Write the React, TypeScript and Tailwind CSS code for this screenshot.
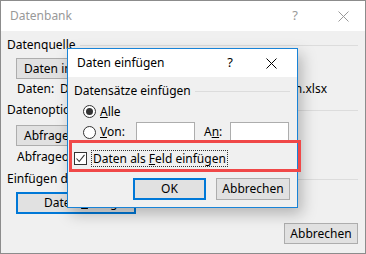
function CloseIcon({ className }: { className: string }) {
  return (
    <svg width="11" height="11" viewBox="0 0 11 11" className={className}>
      <path d="M0.5 0.5 L10.5 10.5 M10.5 0.5 L0.5 10.5" stroke="currentColor" strokeWidth="1" fill="none" />
    </svg>
  );
}

function Heading({ text }: { text: string }) {
  return (
    <div className="flex items-center h-[16px]">
      <span className="whitespace-nowrap">{text}</span>
      <div className="flex-1 h-px bg-[#dcdcdc] ml-[4px]" />
    </div>
  );
}

function Radio({ checked }: { checked?: boolean }) {
  return (
    <span className="w-[13px] h-[13px] rounded-full border border-[#333] bg-white flex items-center justify-center">
      {checked && <span className="w-[7px] h-[7px] rounded-full bg-[#333]" />}
    </span>
  );
}

export default function App() {
  return (
    <div
      className="relative w-[366px] h-[254px] border border-[#8c8c8c] bg-[#f0f0f0] text-[12px] text-black overflow-hidden"
      style={{ fontFamily: '"Noto Sans", "Open Sans", sans-serif' }}
    >
      {/* outer dialog */}
      <div className="h-[30px] bg-white flex items-center pl-[9px] pr-[16px] text-[#999]">
        <span className="text-[12px]">Datenbank</span>
        <span className="ml-auto mr-[40px] text-[13px]">?</span>
        <CloseIcon className="text-[#999]" />
      </div>
      <div className="px-[6px] pr-[7px] pt-[6px]">
        <Heading text="Datenquelle" />
        <div className="pl-[9px] mt-[5px]">
          <button className="w-[120px] h-[21px] bg-[#e1e1e1] border border-[#adadad] text-left pl-[7px] whitespace-nowrap">
            Daten importieren...
          </button>
        </div>
        <div className="pl-[10px] w-[320px] h-[16px] mt-[2px] flex items-center whitespace-nowrap">
          <span className="w-[43px] shrink-0">Daten:</span>
          <span className="flex-1 min-w-0 overflow-hidden">D:\Benutzer\Dokumente\Excel\</span>
          <span className="shrink-0">Kundendaten.xlsx</span>
        </div>
        <div className="mt-[5px]">
          <Heading text="Datenoptionen" />
        </div>
        <div className="pl-[9px] mt-[7px]">
          <button className="w-[120px] h-[21px] bg-[#e1e1e1] border border-[#adadad] text-left pl-[7px] whitespace-nowrap">
            Abfrageoptionen...
          </button>
        </div>
        <div className="pl-[10px] h-[16px] mt-[3px] flex items-center whitespace-nowrap">Abfrageoptionen</div>
        <div className="mt-[6px]">
          <Heading text="Einfügen der Daten" />
        </div>
        <div className="pl-[9px] mt-[5px]">
          <button className="w-[120px] h-[22px] bg-[#e1e1e1] border-2 border-[#0078d7] text-left pl-[26px] whitespace-nowrap">
            Daten <span className="underline">e</span>infügen
          </button>
        </div>
        <div className="flex justify-end mt-[9px]">
          <button className="w-[74px] h-[21px] bg-[#e1e1e1] border border-[#adadad]">Abbrechen</button>
        </div>
      </div>

      {/* inner dialog */}
      <div className="absolute left-[66px] top-[47px] w-[231px] h-[160px] border border-[#1883d7] bg-[#f0f0f0] shadow-[4px_6px_14px_rgba(0,0,0,0.25)]">
        <div className="h-[28px] bg-white flex items-center pl-[9px] pr-[20px]">
          <span>Daten einfügen</span>
          <span className="ml-auto mr-[33px] text-[13px]">?</span>
          <CloseIcon className="text-black" />
        </div>
        <div className="pl-[6px] pr-[7px] pt-[6px]">
          <Heading text="Datensätze einfügen" />
          <div className="pl-[9px] mt-[4px] h-[17px] flex items-center gap-[4px]">
            <Radio checked />
            <span>
              <span className="underline">A</span>lle
            </span>
          </div>
          <div className="pl-[9px] mt-[1px] h-[22px] flex items-center">
            <Radio />
            <span className="ml-[4px] w-[36px]">
              <span className="underline">V</span>on:
            </span>
            <span className="w-[59px] h-[20px] bg-white border border-[#adadad]" />
            <span className="ml-[9px] w-[26px]">
              A<span className="underline">n</span>:
            </span>
            <span className="w-[59px] h-[20px] bg-white border border-[#adadad]" />
          </div>
          <div className="mt-[7px] h-[17px] flex items-center">
            <span className="w-[13px] h-[13px] border border-[#333] bg-white flex items-center justify-center">
              <svg width="11" height="11" viewBox="0 0 11 11">
                <path d="M1.5 5.5 L4.2 8.5 L9.5 1.8" stroke="#333" strokeWidth="1.1" fill="none" />
              </svg>
            </span>
            <span className="ml-[4px] px-[1px] border border-dotted border-[#333] leading-[15px] whitespace-nowrap">
              Daten als <span className="underline">F</span>eld einfügen
            </span>
          </div>
          <div className="flex justify-end gap-[10px] mt-[11px]">
            <button className="w-[73px] h-[22px] bg-[#e1e1e1] border-2 border-[#0078d7]">OK</button>
            <button className="w-[74px] h-[22px] bg-[#e1e1e1] border border-[#adadad]">Abbrechen</button>
          </div>
        </div>
      </div>

      {/* highlight */}
      <div className="absolute left-[68px] top-[139px] w-[232px] h-[32px] border-[3px] border-[#f04848]" />
    </div>
  );
}
